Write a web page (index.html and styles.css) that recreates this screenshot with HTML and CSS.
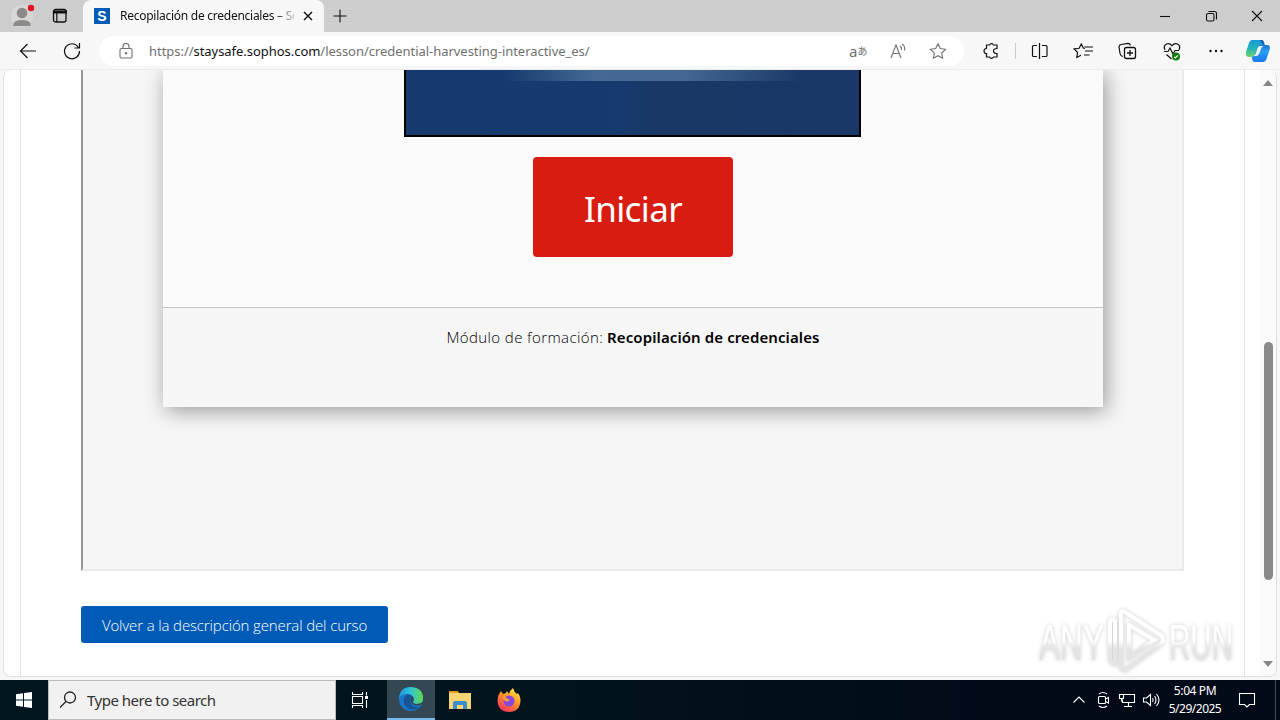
FILE: index.html
```html
<!DOCTYPE html>
<html lang="es">
<head>
<meta charset="utf-8">
<title>Recopilación de credenciales</title>
<link rel="stylesheet" href="styles.css">
</head>
<body>
<div class="desktop">
  <header class="tabbar">
    <svg class="profile" width="32" height="32" viewBox="0 0 32 32"><circle cx="16" cy="16" r="11" fill="#d9d7d6"/><circle cx="16" cy="13" r="5.3" fill="#8d8a88"/><path d="M7.500 26v-2q1-4 8.500-4t8.500 4v2z" fill="#8d8a88"/><circle cx="25" cy="8" r="3.200" fill="#e3121c"/></svg>
    <svg class="tabmenu" width="16" height="16" viewBox="0 0 16 16"><rect x="1.500" y="1.500" width="12.500" height="12.500" rx="2" fill="none" stroke="#111" stroke-width="1.300"/><path d="M1 2.500h14v3H1z" fill="#111"/><path d="M4.800 5v9" stroke="#111" stroke-width="1.200"/></svg>
    <div class="tab">
      <span class="favicon">S</span>
      <span class="tab-title">Recopilación de credenciales – So</span>
      <svg width="10" height="10" viewBox="0 0 10 10" class="line"><path d="M1 1l8 8M9 1L1 9" stroke-width="1.400"/></svg>
    </div>
    <svg class="newtab line" width="14" height="14" viewBox="0 0 14 14"><path d="M7 .5v13M.5 7h13"/></svg>
    <div class="window-buttons">
      <svg class="line" width="46" height="32" viewBox="0 0 46 32"><path d="M18 16.500h10"/></svg>
      <svg class="line" width="46" height="32" viewBox="0 0 46 32"><rect x="18.500" y="13.500" width="7.500" height="7.500" rx="1.500"/><path d="M20.500 11.500h6q2 0 2 2v6"/></svg>
      <svg class="line" width="46" height="32" viewBox="0 0 46 32"><path d="M18 11l10 10M28 11L18 21"/></svg>
    </div>
  </header>

  <nav class="toolbar">
    <svg class="tool line" viewBox="0 0 44 38"><path d="M30 19H14.500m7-7l-7 7 7 7" stroke-width="1.200"/></svg>
    <svg class="tool line" viewBox="0 0 44 38"><path d="M28.500 15.500A7.500 7.500 0 1 0 29.500 19M29.500 11v5h-5" stroke-width="1.200"/></svg>
    <div class="address">
      <svg class="lock" width="14" height="16" viewBox="0 0 14 16"><rect x="1" y="5.500" width="12" height="9.500" rx="1.500"/><path d="M4 5.500V3.500a3 3 0 0 1 6 0v2"/><circle cx="7" cy="10.300" r=".7"/></svg>
      <span class="url">https://<b>staysafe.sophos.com</b>/lesson/credential-harvesting-interactive_es/</span>
      <div class="address-icons">
        <span class="translate">a<i>あ</i></span>
        <svg width="20" height="20" viewBox="0 0 20 20"><path d="M3 17L8 4l5 13M4.800 12.500h6.400M12 5q2 1.500 1.500 4M14 3q3.500 2 2.500 6.500"/></svg>
        <svg width="20" height="20" viewBox="0 0 20 20"><path d="M10 2.800l2.300 4.800 5.200.7-3.800 3.700.9 5.200L10 14.700l-4.600 2.500.9-5.200-3.800-3.700 5.200-.7z"/></svg>
      </div>
    </div>
    <svg class="tool line" viewBox="0 0 44 38"><path d="M17.500 13h3a2.200 2.200 0 0 1 4 0h3.500v3.500q-3.500 0-3.500 2.500t3.500 2.500V25h-3.500a2.200 2.200 0 0 1-4 0h-3v-3.500a2.500 2.500 0 0 1 0-5z" stroke-width="1.200"/></svg>
    <span class="divider"></span>
    <svg class="tool line" viewBox="0 0 44 38"><path d="M19 13.500h-3.500q-1 0-1 1v9q0 1 1 1H19M24 13.500h4q1 0 1 1v9q0 1-1 1h-4M21.500 11v16" stroke-width="1.200"/></svg>
    <svg class="tool line" viewBox="0 0 44 38"><path d="M22 17.500l-1.700-.5-2-4-2.200 4.300-5 .7 3.500 3.500-.8 5L18 24.300M21.500 16H30M22 20h8M21 24h5.500" transform="translate(1 -1)" stroke-width="1.200"/></svg>
    <svg class="tool line" viewBox="0 0 44 38"><path d="M17 24.500q-2.500-.5-3-3L13 15q0-2 2-2.500l7-1.200q2 0 2.500 2" stroke-width="1.200"/><rect x="18.500" y="15.500" width="11" height="11" rx="2" stroke-width="1.300"/><path d="M24 18v6M21 21h6" stroke-width="1.300"/></svg>
    <svg class="tool line" viewBox="0 0 44 38"><path d="M15 18q-2-4 1.500-6 3-1.300 5.500 1.700 2.500-3 5.500-1.700 3.500 2 1.500 6M14 19.500h4l2-3.500 3 6 2-3.500h4M16.500 22.500l5 4.500" stroke-width="1.200"/><circle cx="26" cy="24.500" r="4" fill="#107c10" stroke="none"/><path d="M24 24.800l1.300 1.200 2.600-2.700" stroke="#fff"/></svg>
    <svg class="tool" viewBox="0 0 44 38"><g fill="#111"><circle cx="16.500" cy="19" r="1.200"/><circle cx="22" cy="19" r="1.200"/><circle cx="27.500" cy="19" r="1.200"/></g></svg>
    <svg class="copilot" width="26" height="26" viewBox="0 0 26 26">
      <defs><linearGradient id="ca" x1="0" y1="0" x2="0" y2="1"><stop offset="0" stop-color="#1798d5"/><stop offset=".5" stop-color="#20b5bb"/><stop offset="1" stop-color="#79d765"/></linearGradient><linearGradient id="cb" x1="0" y1="0" x2="0" y2="1"><stop offset="0" stop-color="#1453a8"/><stop offset=".5" stop-color="#299cf5"/><stop offset="1" stop-color="#1979ef"/></linearGradient></defs>
      <path d="M7 2h9q2 0 2.500 2l.8 3h-3q-2 0-2.800 2l-3 8q-1 2-3 2H4q-4 0-3-5L4 5q1-3 3-3z" fill="url(#ca)"/>
      <path d="M15 2h1.500q2 0 2.500 2l.8 3h2.700q3 0 2.300 4l-3 9q-1 4-4 4H10q-2 0-2.600-2L6.700 19q2 0 2.700-2l3.200-8q.8-2 2.800-2h2z" fill="url(#cb)"/>
      <path d="M15 8h3.500q-2 1-2.500 3l-2 5q-1 2-3 2H8.500q2-1 2.500-3l1.500-5q.7-2 2.500-2z" fill="#eef9ff"/>
    </svg>
  </nav>

  <main class="viewport">
    <div class="page">
      <section class="lesson">
        <div class="card">
          <div class="card-body">
            <div class="picture"><div class="glow"></div></div>
            <div class="start">Iniciar</div>
          </div>
          <div class="card-foot"><span class="module">Módulo de formación:</span> <strong>Recopilación de credenciales</strong></div>
        </div>
      </section>
      <div class="return"><span>Volver a la descripción general del curso</span></div>
    </div>
    <div class="scrollbar">
      <svg width="10" height="6" viewBox="0 0 10 6"><path d="M0 6l5-6 5 6z" fill="#858585"/></svg>
      <div class="thumb"></div>
      <svg width="10" height="6" viewBox="0 0 10 6"><path d="M0 0l5 6 5-6z" fill="#858585"/></svg>
    </div>
    <svg class="watermark" width="210" height="72" viewBox="0 0 210 72">
      <defs><linearGradient id="wg" x1="0" y1="0" x2="0" y2="72" gradientUnits="userSpaceOnUse"><stop offset=".5" stop-color="#fff"/><stop offset=".6" stop-color="#e4e4e4"/></linearGradient></defs>
      <g class="mark-text"><text x="4" y="55" textLength="65" lengthAdjust="spacingAndGlyphs">ANY</text><text x="134" y="55" textLength="64" lengthAdjust="spacingAndGlyphs">RUN</text></g>
      <g class="mark-icon"><path d="M88 6l38 24q4 5 0 9L91 65q-5 1-5-4V9q0-3 2-3zM94 20v33l25-18zM80 14q-5 0-5 5v33q0 6 5 7V14" fill="none"/></g>
    </svg>
  </main>

  <footer class="taskbar">
    <div class="task start-button"><svg width="16" height="16" viewBox="0 0 16 16"><path d="M0 2.300l7-1v6.300H0zM8 1.100L16 0v7.600H8zM0 8.500h7v6.300l-7-1zM8 8.500h8V16l-8-1.100z" fill="#fff"/></svg></div>
    <div class="search"><svg width="18" height="18" viewBox="0 0 18 18"><circle cx="11" cy="6.500" r="5.500"/><path d="M7 10.500L1 16.500"/></svg><span>Type here to search</span></div>
    <div class="task taskview"><svg class="white" width="18" height="16" viewBox="0 0 18 16"><path d="M1.500 0v2.500h10V0M1.500 16v-2.500h10V16M1.500 4.500h10v7h-10zM15.500 0v3.500M15.500 8v8"/><path d="M14 4h3v3h-3z" fill="#fff" stroke="none"/></svg></div>
    <div class="task active"><svg width="26" height="26" viewBox="0 0 26 26">
      <defs><linearGradient id="ea" x1="0" x2="1"><stop stop-color="#2294de"/><stop offset=".5" stop-color="#30c5d4"/><stop offset="1" stop-color="#65d84e"/></linearGradient></defs>
      <circle cx="13" cy="13" r="12" fill="#1878cb"/><path d="M1 12Q2 1 13 1q12 1 12 11 0 6-6 6-4 0-4-2 1-1 1-3-1-5-7-5-5 0-8 4z" fill="url(#ea)"/><path d="M9 8q-7 7 0 14 6 4 13-1-8 1-10-5-1-4 2-6-2-2-5-2z" fill="#165496"/><path d="M14 10q-3 3-1 6.500 3 4.500 10 2.500l2-3q-3 2-7 2-4-1-3-3 2-2-1-5z" fill="#334852"/></svg></div>
    <div class="task"><svg width="22" height="20" viewBox="0 0 22 20"><path d="M0 1h8l2 2h12v16H0z" fill="#f8d472"/><path d="M0 1h8l2 2H1z" fill="#e59b1b"/><path d="M4 19v-6q0-2 2-2h10q2 0 2 2v6h-4v-4H8v4z" fill="#3d8fcc"/></svg></div>
    <div class="task"><svg width="24" height="24" viewBox="0 0 24 24">
      <defs><linearGradient id="fa" x1=".8" y1="0" x2=".2" y2="1"><stop stop-color="#fff04a"/><stop offset=".45" stop-color="#ff9228"/><stop offset="1" stop-color="#f72a65"/></linearGradient></defs>
      <path d="M2 6l2-3 2 3 3-1 1-2 2 3q1-4 4-6 1 4 4 6l1-1q3 4 2.500 8-1 11-11.500 11T.5 13Q.5 9 2 6z" fill="url(#fa)"/><circle cx="12" cy="13" r="5.500" fill="#8648db"/><path d="M5 9q3-1 6 2l2 1q-3 3-6 0z" fill="#ff9a32"/></svg></div>
    <div class="tray">
      <svg class="white" width="24" height="20" viewBox="0 0 24 20"><path d="M6.500 12.500L12 7l5.500 5.500"/></svg>
      <svg class="white" width="24" height="20" viewBox="0 0 24 20"><rect x="7.500" y="6.500" width="7" height="7" rx="1"/><path d="M14.500 9l3-1.500v5.500l-3-1.500M8 4q4-3 8 0M8 16q4 3 8 0"/></svg>
      <svg class="white" width="24" height="20" viewBox="0 0 24 20"><path d="M8.500 4.500h11v8h-12v-3M13.500 12.500V16M9 16.500h8M4.500 4.500h4v4h-4zM6.500 8.500v3"/></svg>
      <svg class="white" width="24" height="20" viewBox="0 0 24 20"><path d="M4.500 8v4h3l4 3.500v-11L7.500 8zM13.500 8q1.500 2 0 4M15.500 6q3 4 0 8M17.500 4q5 6 0 12"/></svg>
      <div class="clock"><span>5:04 PM</span><span class="date">5/29/2025</span></div>
      <svg class="white notice" width="18" height="18" viewBox="0 0 18 18"><path d="M1.500 2.500h15v11h-5l-2.500 2.500-2.500-2.500h-5z"/></svg>
    </div>
  </footer>
</div>
</body>
</html>
```
FILE: styles.css
```css
* { box-sizing: border-box; }
body { margin: 0; background: #f7f7f7; font-family: "Noto Sans", sans-serif; }
svg { flex: none; display: block; }
.desktop { width: 1280px; height: 720px; display: flex; flex-direction: column; overflow: hidden; }
.line { fill: none; stroke: #111; stroke-width: 1.1; }
.white { fill: none; stroke: #fff; stroke-width: 1.1; }

.tabbar { height: 32px; background: #cdcdcd; display: flex; align-items: center; flex: none; }
.profile { margin-left: 6px; }
.tabmenu { margin: 0 15px 0 14px; }
.tab { width: 241px; height: 32px; background: #f7f7f7; border-radius: 8px 8px 0 0; display: flex; align-items: center; padding: 0 11px; }
.favicon { width: 16px; height: 16px; background: #005bb5; color: #fff; font: bold 14px/16px "Liberation Sans", sans-serif; text-align: center; }
.tab-title { width: 174px; margin: 0 9px 0 10px; overflow: hidden; white-space: nowrap; font-size: 12px; line-height: 18px; letter-spacing: -.26px; color: #111; -webkit-mask-image: linear-gradient(90deg, #000 88%, transparent 103%); mask-image: linear-gradient(90deg, #000 88%, transparent 103%); }
.newtab { margin-left: 9px; }
.window-buttons { display: flex; margin-left: auto; }

.toolbar { height: 38px; flex: none; display: flex; align-items: center; padding-left: 6px; background: #f7f7f7; border-bottom: 1px solid #ececec; }
.tool { width: 44px; height: 38px; }
.address { width: 865px; height: 30px; margin: 0 5px; border-radius: 15px; background: #fff; display: flex; align-items: center; padding: 0 16px 0 20px; }
.lock, .address-icons svg { fill: none; stroke: #707070; stroke-width: 1.1; }
.url { margin-left: 16px; font-size: 13px; color: #707070; letter-spacing: -.04px; white-space: nowrap; }
.url b { font-weight: 400; color: #111; }
.address-icons { margin-left: auto; display: flex; align-items: center; gap: 20px; }
.translate { width: 19px; font-size: 15px; line-height: 18px; color: #707070; display: flex; align-items: center; }
.translate i { font: 10px "Noto Sans CJK JP", sans-serif; }
.divider { width: 1px; height: 16px; background: #ccc; margin: 0 2px; }
.copilot { margin-left: 7px; }

.viewport { position: relative; height: 607px; margin: 0 3px 3px; flex: none; display: flex; background: #fff; border: 1px solid #dedede; border-top: 0; border-radius: 8px; overflow: hidden; }
.page { width: 1225px; margin-left: 16px; border: solid #e1e1e1; border-width: 0 1px; padding-left: 60px; }
.lesson { width: 1103px; height: 501px; border: solid; border-width: 0 2px 2px; border-color: #eaeaea #eaeaea #eaeaea #989898; background: #f6f6f6; padding-left: 80px; overflow: hidden; }
.card { width: 940px; height: 337px; background: #fafafa; box-shadow: 3px 4px 20px rgba(0, 0, 0, .38); display: flex; flex-direction: column; }
.card-body { height: 237px; display: flex; flex-direction: column; align-items: center; }
.picture { width: 457px; height: 67px; margin-right: 1px; border: solid #000; border-width: 0 2px 2px; background: linear-gradient(90deg, #163a6b, #153b6f 48%, #193865 54%, #193767); display: flex; justify-content: center; padding-left: 42px; }
.glow { width: 300px; height: 11px; background: linear-gradient(90deg, transparent, #456994 30%, #456792 60%, transparent); }
.start { width: 200px; height: 100px; margin-top: 20px; padding-top: 3px; border-radius: 4px; background: #d91c12; color: #fff; display: flex; align-items: center; justify-content: center; font-size: 35px; line-height: 50px; letter-spacing: -.6px; }
.card-foot { height: 100px; background: #f6f6f6; border-top: 1px solid #c4c4c4; padding-top: 18px; font-size: 15px; line-height: 22px; text-align: center; color: #000; white-space: nowrap; }
.module { font-family: "Open Sans", sans-serif; font-weight: 300; letter-spacing: .4px; }
.card-foot strong { letter-spacing: .1px; font-weight: 600; }
.return { width: 307px; height: 37px; margin-top: 35px; border-radius: 3px; background: #005bb6; color: #fff; display: flex; align-items: center; justify-content: center; font-size: 15px; font-family: "Open Sans", sans-serif; font-weight: 300; letter-spacing: -.13px; white-space: nowrap; }
.scrollbar { width: 16px; margin-left: 15px; background: #fafafa; display: flex; flex-direction: column; align-items: center; padding-top: 10px; }
.thumb { width: 9px; height: 238px; margin: 256px 0 81px; border-radius: 5px; background: #8a8a8a; }
.watermark { position: absolute; left: 1031px; top: 535px; filter: drop-shadow(0 0 2px rgba(0, 0, 0, .2)); }
.mark-text { fill: url(#wg); font: 50px "Liberation Sans", sans-serif; }
.mark-icon { stroke: url(#wg); stroke-width: 4; }

.taskbar { height: 40px; flex: none; display: flex; background: linear-gradient(90deg, #02161f, #02131c 45%, #020b19 75%, #030a18); }
.task { width: 49px; height: 40px; display: flex; align-items: center; justify-content: center; }
.start-button { width: 48px; }
.search { width: 288px; background: #f1f1f1; border: 1px solid #bbb; display: flex; align-items: center; padding-left: 10px; gap: 10px; font-size: 15px; color: #333; letter-spacing: -.5px; white-space: nowrap; }
.search svg { fill: none; stroke: #222; stroke-width: 1.3; }
.taskview { width: 51px; padding-right: 3px; }
.active { width: 48px; background: #334852; border-bottom: 2px solid #76b9ed; }
.tray { margin-left: auto; display: flex; align-items: center; color: #fff; border-right: 1px solid #444d59; margin-right: 4px; }
.clock { width: 62px; margin-left: 1px; display: flex; flex-direction: column; align-items: center; font-size: 12px; line-height: 18px; letter-spacing: -.4px; white-space: nowrap; }
.date { letter-spacing: -.5px; }
.notice { margin: 0 19px 0 12px; }
```
